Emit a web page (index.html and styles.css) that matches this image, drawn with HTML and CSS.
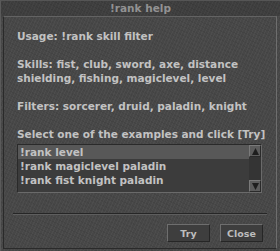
FILE: index.html
```html
<!DOCTYPE html>
<html>
<head>
<meta charset="utf-8">
<link rel="stylesheet" href="styles.css">
</head>
<body>
<div class="window">
  <div class="titlebar">!rank help</div>
  <div class="panel">
    <div class="body">
      <p class="line">Usage: !rank skill filter</p>
      <p class="line">Skills: fist, club, sword, axe, distance<br>shielding, fishing, magiclevel, level</p>
      <p class="line">Filters: sorcerer, druid, paladin, knight</p>
      <p class="line">Select one of the examples and click [Try]</p>
      <div class="listbox">
        <ul class="items">
          <li class="item selected">!rank level</li>
          <li class="item">!rank magiclevel paladin</li>
          <li class="item">!rank fist knight paladin</li>
        </ul>
        <div class="scrollbar">
          <div class="sbtn up"><svg width="9" height="9" viewBox="0 0 9 9"><path d="M4.5 1 L8 8 L1 8 Z" fill="#1e1e1e"/></svg></div>
          <div class="strack"></div>
          <div class="sbtn down"><svg width="9" height="9" viewBox="0 0 9 9"><path d="M1 1 L8 1 L4.5 8 Z" fill="#1e1e1e"/></svg></div>
        </div>
      </div>
    </div>
    <div class="separator"></div>
    <div class="buttons">
      <button class="btn">Try</button>
      <button class="btn">Close</button>
    </div>
  </div>
</div>
</body>
</html>
```
FILE: styles.css
```css
html, body {
  margin: 0;
  padding: 0;
  background: #404040;
}
.window {
  width: 280px;
  height: 251px;
  box-sizing: border-box;
  display: flex;
  flex-direction: column;
  background-color: #474747;
  background-image:
    repeating-linear-gradient(115deg, rgba(255,255,255,0.035) 0 1px, transparent 1px 3px),
    repeating-linear-gradient(25deg, rgba(0,0,0,0.06) 0 1px, transparent 1px 4px);
  border-left: 1px solid #5a5a5a;
  border-top: 1px solid #555;
  font-family: "DejaVu Sans", Verdana, sans-serif;
  font-weight: bold;
}
.titlebar {
  height: 15px;
  line-height: 15px;
  text-align: center;
  color: #929292;
  font-size: 10.5px;
  background-color: rgba(0,0,0,0.12);
}
.panel {
  flex: 1;
  margin: 0 3px 2px 2px;
  border-left: 1px solid #2a2a2a;
  border-top: 1px solid #636363;
  border-right: 1px solid #6e6e6e;
  border-bottom: 1px solid #2a2a2a;
  display: flex;
  flex-direction: column;
}
.body {
  padding: 12px 14px 0 13px;
}
.line {
  margin: 0 0 14px 0;
  color: #c2c2c2;
  font-size: 10.5px;
  line-height: 14px;
  white-space: nowrap;
}
.line:nth-child(4) {
  margin-bottom: 3px;
}
.listbox {
  display: flex;
  height: 47px;
  border-top: 1px solid #2a2a2a;
  border-left: 1px solid #2a2a2a;
  border-right: 1px solid #6a6a6a;
  border-bottom: 1px solid #6a6a6a;
  background: #3c3c3c;
}
.items {
  list-style: none;
  margin: 0;
  padding: 0;
  flex: 1;
}
.item {
  height: 14px;
  line-height: 14px;
  padding-left: 2px;
  color: #c2c2c2;
  font-size: 10.5px;
  white-space: nowrap;
}
.item.selected {
  background: #585858;
}
.scrollbar {
  width: 12px;
  display: flex;
  flex-direction: column;
  background: #343434;
}
.strack { flex: 1; }
.sbtn {
  height: 12px;
  display: flex;
  align-items: center;
  justify-content: center;
  background: #5c5c5c;
  border-top: 1px solid #7a7a7a;
  border-left: 1px solid #7a7a7a;
  border-right: 1px solid #2a2a2a;
  border-bottom: 1px solid #2a2a2a;
  box-sizing: border-box;
}
.separator {
  margin: 20px 9px 0 9px;
  height: 1px;
  background: #262626;
  border-bottom: 1px solid #5e5e5e;
}
.buttons {
  display: flex;
  justify-content: flex-end;
  gap: 10px;
  padding: 9px 13px 0 0;
}
.btn {
  width: 43px;
  height: 18px;
  padding: 0;
  background: #3e3e3e;
  color: #bdbdbd;
  font-family: "DejaVu Sans", Verdana, sans-serif;
  font-weight: bold;
  font-size: 9.5px;
  border-top: 1px solid #6e6e6e;
  border-left: 1px solid #6e6e6e;
  border-right: 1px solid #262626;
  border-bottom: 1px solid #262626;
}
```
